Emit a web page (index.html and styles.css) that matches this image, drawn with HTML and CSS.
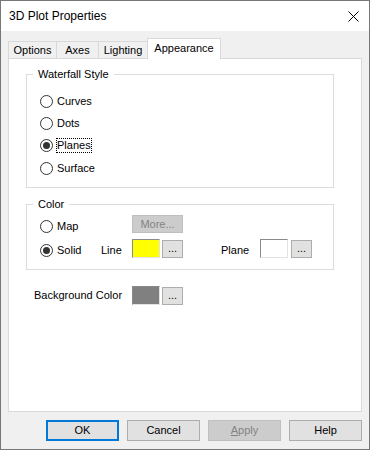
FILE: index.html
```html
<!DOCTYPE html>
<html>
<head>
<meta charset="utf-8">
<link rel="stylesheet" href="styles.css">
</head>
<body>
<div class="window">
  <div class="titlebar">
    <span class="title">3D Plot Properties</span>
    <svg class="close" width="11" height="11" viewBox="0 0 11 11"><path d="M0.5 0.5L10.5 10.5M10.5 0.5L0.5 10.5" stroke="#000" stroke-width="1" fill="none"/></svg>
  </div>
  <div class="content">
    <div class="tabs">
      <div class="tab t-options">Options</div>
      <div class="tab t-axes">Axes</div>
      <div class="tab t-lighting">Lighting</div>
      <div class="tab selected t-appearance">Appearance</div>
    </div>
    <div class="panel">
      <fieldset class="group waterfall">
        <legend>Waterfall Style</legend>
        <div class="radio-list">
          <div class="radio"><span class="circle"></span><span class="lbl">Curves</span></div>
          <div class="radio"><span class="circle"></span><span class="lbl">Dots</span></div>
          <div class="radio checked tall"><span class="circle"></span><span class="lbl focus">Planes</span></div>
          <div class="radio"><span class="circle"></span><span class="lbl">Surface</span></div>
        </div>
      </fieldset>
      <fieldset class="group color">
        <legend>Color</legend>
        <div class="color-row row-map">
          <div class="radio w-map"><span class="circle"></span><span class="lbl">Map</span></div>
          <div class="btn disabled more">More...</div>
        </div>
        <div class="color-row row-solid">
          <div class="radio checked w-solid"><span class="circle"></span><span class="lbl">Solid</span></div>
          <span class="txt w-line">Line</span>
          <div class="swatch yellow"></div>
          <div class="btn dots">...</div>
          <span class="txt w-plane">Plane</span>
          <div class="swatch white"></div>
          <div class="btn dots dots-plane">...</div>
        </div>
      </fieldset>
      <div class="bg-row">
        <span class="txt w-bg">Background Color</span>
        <div class="swatch gray"></div>
        <div class="btn dots">...</div>
      </div>
    </div>
    <div class="buttons">
      <div class="btn action default">OK</div>
      <div class="btn action">Cancel</div>
      <div class="btn action disabled"><span class="u">A</span>pply</div>
      <div class="btn action">Help</div>
    </div>
  </div>
</div>
</body>
</html>
```

FILE: styles.css
```css
* { box-sizing: border-box; }
html, body { margin: 0; padding: 0; }
body {
  width: 370px;
  height: 450px;
  font-family: "Liberation Sans", Arial, sans-serif;
  font-size: 11px;
  color: #000;
  background: #fff;
}
.window {
  width: 370px;
  height: 450px;
  border: 1px solid #777;
  background: #f0f0f0;
  display: flex;
  flex-direction: column;
}
.titlebar {
  height: 30px;
  flex: none;
  background: #fff;
  display: flex;
  align-items: center;
  justify-content: space-between;
  padding: 0 10px 0 8px;
}
.title { font-size: 12px; line-height: 14px; }
.close { display: block; }
.content {
  flex: 1;
  padding: 7px 7px 0 7px;
  display: flex;
  flex-direction: column;
}
.tabs {
  display: flex;
  align-items: flex-end;
  height: 20px;
  flex: none;
}
.tab {
  height: 17px;
  border: 1px solid #d9d9d9;
  border-bottom: none;
  margin-left: -1px;
  display: flex;
  align-items: center;
  justify-content: center;
  line-height: 13px;
  background: #f0f0f0;
}
.tab:first-child { margin-left: 0; }
.t-options { width: 49px; }
.t-axes { width: 43px; }
.t-lighting { width: 50px; }
.t-appearance { width: 74px; }
.tab.selected {
  height: 21px;
  margin-bottom: -1px;
  background: #fff;
  position: relative;
  z-index: 1;
  padding-bottom: 2px;
}
.panel {
  height: 354px;
  flex: none;
  background: #fff;
  border: 1px solid #d9d9d9;
  padding: 9px 0 0 17px;
  display: flex;
  flex-direction: column;
}
.group {
  margin: 0;
  width: 308px;
  min-width: 0;
  border: 1px solid #dcdcdc;
}
.group legend {
  padding: 0 5px;
  margin-left: -7px;
  line-height: 13px;
}
.waterfall { padding: 9px 13px 8px 13px; }
.color { margin-top: 10px; padding: 4px 13px 7px 13px; }
.radio-list { display: flex; flex-direction: column; }
.radio {
  display: flex;
  align-items: center;
  height: 22px;
}
.radio.tall { height: 23px; }
.circle {
  width: 13px;
  height: 13px;
  flex: none;
  border: 1px solid #333;
  border-radius: 50%;
  background: #fff;
  display: flex;
  align-items: center;
  justify-content: center;
}
.checked .circle::after {
  content: "";
  width: 7px;
  height: 7px;
  border-radius: 50%;
  background: #333;
}
.lbl { margin-left: 4px; line-height: 13px; }
.focus { outline: 1px dotted #000; }
.color-row {
  display: flex;
  align-items: center;
  height: 23px;
}
.row-map { margin-bottom: 1px; }
.w-map { width: 92px; height: 23px; }
.w-solid { width: 61px; height: 23px; }
.more {
  width: 51px;
  height: 18px;
  align-self: flex-start;
}
.txt { line-height: 13px; }
.w-line { width: 31px; }
.w-plane { width: 39px; margin-left: 38px; }
.swatch {
  width: 28px;
  height: 19px;
  flex: none;
  border: 1px solid;
  border-color: #8a8a8a #e3e3e3 #e3e3e3 #8a8a8a;
}
.row-solid .swatch { align-self: flex-start; }
.yellow { background: #ffff00; }
.white { background: #fff; }
.gray { background: #808080; }
.btn {
  display: flex;
  align-items: center;
  justify-content: center;
  background: #e1e1e1;
  border: 1px solid #adadad;
  line-height: 13px;
  flex: none;
}
.dots {
  width: 21px;
  height: 18px;
  margin-left: 2px;
  padding-bottom: 1px;
}
.row-solid .dots { align-self: flex-start; margin-top: 1px; }
.dots-plane { margin-left: 3px; }
.btn.disabled {
  background: #cccccc;
  border-color: #bfbfbf;
  color: #838383;
}
.bg-row {
  display: flex;
  align-items: center;
  height: 19px;
  margin-top: 16px;
  margin-left: 8px;
}
.w-bg { width: 98px; }
.bg-row .dots { align-self: flex-start; margin-top: 1px; }
.buttons {
  display: flex;
  justify-content: flex-end;
  gap: 8px;
  margin-top: 8px;
}
.action { width: 73px; height: 21px; }
.action.default { border: 2px solid #0078d7; }
.u { text-decoration: underline; }
```
